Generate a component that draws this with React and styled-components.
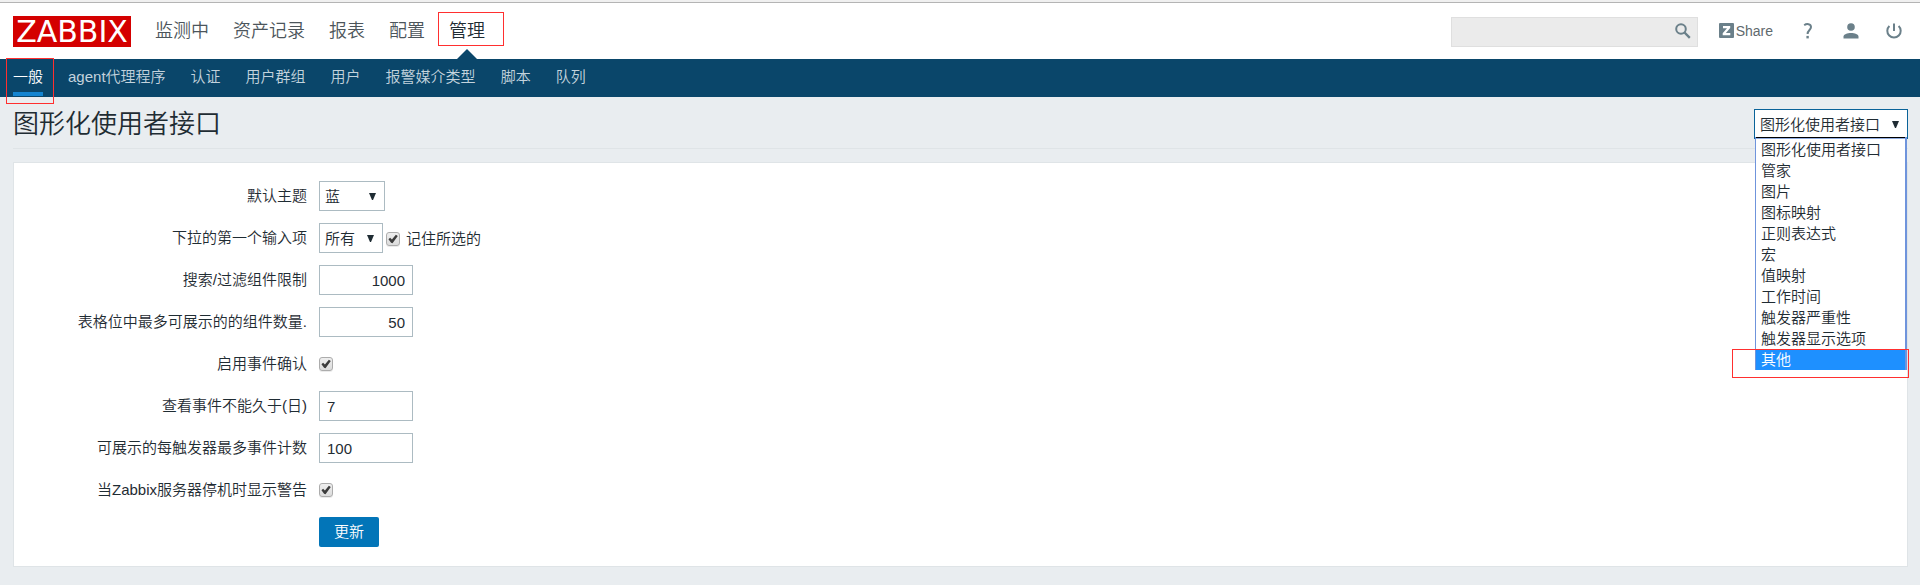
import React from 'react';
import styled, { createGlobalStyle } from 'styled-components';

const sans = '"Liberation Sans", "Noto Sans CJK SC", sans-serif';

const GlobalStyle = createGlobalStyle`
  *, *::before, *::after { box-sizing: border-box; }
  body {
    margin: 0;
    background: #e9edf0;
    color: #1f2c33;
    font: 350 15px/20px ${sans};
  }
  button, input, select { font: inherit; color: inherit; }
  a { color: inherit; text-decoration: none; }
  ul { margin: 0; padding: 0; list-style: none; }
`;

const Page = styled.div`
  min-height: 100vh;
  background: #e9edf0;
`;

const Header = styled.header`
  display: flex;
  align-items: center;
  height: 59px;
  padding: 4px 5px 0 13px;
  background: #fff;
  box-shadow: inset 0 2px #f0f0f0, inset 0 3px #b4b4b4;
`;

const Logo = styled.a`
  width: 118px;
  height: 31px;
  background: #d40000;
  color: #fff;
  font: 30px/31px "DejaVu Sans", sans-serif;
  text-align: center;
  white-space: nowrap;
`;

const MainNav = styled.nav`
  display: flex;
  align-self: stretch;
  align-items: center;
  gap: 24px;
  margin-left: 24px;
`;

const MainLink = styled.a`
  position: relative;
  display: flex;
  align-items: center;
  height: 100%;
  padding-bottom: 2px;
  font-size: 18px;
  font-weight: 350;
  white-space: nowrap;
  color: ${(p) => (p.$active ? '#1f2c33' : '#4c555b')};

  ${(p) =>
    p.$active &&
    `&::after {
      content: '';
      position: absolute;
      bottom: 0;
      left: calc(50% - 10px);
      border: solid transparent;
      border-width: 0 10px 10px;
      border-bottom-color: #0a466a;
    }`}
`;

const Tools = styled.div`
  display: flex;
  align-items: center;
  margin-left: auto;
`;

const Search = styled.form`
  display: flex;
  align-items: center;
  width: 247px;
  height: 30px;
  margin-right: 21px;
  padding-right: 6px;
  border: 1px solid #dfdfdf;
  background: #ebebeb;
`;

const SearchInput = styled.input`
  flex: 1;
  min-width: 0;
  height: 100%;
  padding: 0 8px;
  border: 0;
  outline: 0;
  background: transparent;
`;

const IconButton = styled.button`
  display: flex;
  padding: 0 0 2px;
  border: 0;
  background: none;
`;

const ShareLink = styled.a`
  display: flex;
  align-items: center;
  gap: 2px;
  margin-right: 13px;
  padding-bottom: 2px;
  font-size: 14px;
  color: #5f696e;
`;

const ToolLink = styled.a`
  display: flex;
  justify-content: center;
  width: 43px;
  padding-bottom: 2px;
`;

const SubNav = styled.nav`
  display: flex;
  gap: 25px;
  height: 38px;
  padding: 0 13px;
  background: #0a466a;
`;

const SubLink = styled.a`
  display: flex;
  align-items: center;
  height: 37px;
  border-bottom: 4px solid ${(p) => (p.$active ? '#1384d0' : 'transparent')};
  padding-top: 2px;
  color: ${(p) => (p.$active ? '#fff' : '#c3d3dd')};
  white-space: nowrap;
`;

const Mark = styled.span`
  position: absolute;
  inset: ${(p) => p.$inset};
  height: ${(p) => p.$height || 'auto'};
  border: 1px solid #ff2f2f;
  pointer-events: none;
`;

const Anchor = styled.span`
  position: relative;
  display: flex;
`;

const Main = styled.main`
  padding: 12px 12px 18px 13px;
`;

const TitleBar = styled.div`
  display: flex;
  align-items: flex-start;
  justify-content: space-between;
  height: 40px;
  border-bottom: 1px solid #dfe4e7;
`;

const Title = styled.h1`
  margin: 0;
  font-size: 26px;
  font-weight: 350;
  line-height: 30px;
`;

const SelectBox = styled.span`
  position: relative;
  display: block;
  width: ${(p) => p.$width};
`;

const Select = styled.select`
  display: block;
  appearance: none;
  width: 100%;
  height: 30px;
  padding: 2px 20px 0 5px;
  border: 1px solid ${(p) => (p.$open ? '#0a6399' : '#acbbc2')};
  border-radius: 0;
  outline: 0;
  background: #fff;
`;

const Arrow = styled.svg`
  position: absolute;
  top: 12px;
  right: 9px;
  pointer-events: none;
`;

const OptionList = styled.ul`
  position: absolute;
  top: 28px;
  left: 1px;
  right: 1px;
  z-index: 1;
  border: solid #6f94dc;
  border-width: 0 2px 0 1px;
  background: #fff;
  box-shadow: inset 0 1px #000, inset 0 2px #8fabdf;
  padding-top: 2px;
`;

const Option = styled.li`
  height: 21px;
  padding-left: 5px;
  line-height: 21px;
  color: ${(p) => (p.$selected ? '#fff' : '#1f2c33')};
  background: ${(p) => (p.$selected ? '#1e90ff' : 'transparent')};
`;

const Card = styled.form`
  display: grid;
  row-gap: 12px;
  margin-top: 13px;
  padding: 18px 10px 19px 0;
  border: 1px solid #dfe4e7;
  background: #fff;
`;

const Row = styled.div`
  display: grid;
  grid-template-columns: 293px 1fr;
  column-gap: 12px;
  align-items: center;
  height: 30px;
`;

const Label = styled.label`
  text-align: right;
`;

const Field = styled.div`
  display: flex;
  align-items: center;
  grid-column: 2;
`;

const TextInput = styled.input`
  width: 94px;
  height: 30px;
  padding: 0 7px;
  border: 1px solid #acbbc2;
  outline: 0;
  text-align: ${(p) => (p.$numeric ? 'right' : 'left')};
`;

const Checkbox = styled.input`
  appearance: none;
  flex: none;
  width: 14px;
  height: 14px;
  margin: 0;
  border: 1px solid #acacac;
  border-radius: 3px;
  background: linear-gradient(#eee, #dcdcdc);
  box-shadow: 0 1px rgba(0, 0, 0, 0.08);

  &:checked::before {
    content: '';
    display: block;
    width: 12px;
    height: 12px;
    background: #3c3c3c;
    clip-path: polygon(12% 52%, 26% 40%, 41% 55%, 74% 14%, 90% 26%, 46% 86%, 34% 82%);
  }
`;

const InlineCheck = styled.label`
  display: flex;
  align-items: center;
  gap: 6px;
  margin-left: 3px;
  padding-top: 2px;
`;

const Submit = styled.button`
  width: 60px;
  height: 30px;
  padding: 0;
  border: 0;
  border-radius: 2px;
  background: #0275b8;
  color: #fff;
`;

const mainLinks = ['监测中', '资产记录', '报表', '配置', '管理'];
const subLinks = ['一般', 'agent代理程序', '认证', '用户群组', '用户', '报警媒介类型', '脚本', '队列'];
const sections = [
  '图形化使用者接口', '管家', '图片', '图标映射', '正则表达式', '宏',
  '值映射', '工作时间', '触发器严重性', '触发器显示选项', '其他',
];

function Dropdown({ id, options, width, open, label, children }) {
  return (
    <SelectBox $width={width}>
      <Select id={id} $open={open} aria-label={label}>
        {options.map((o) => <option key={o}>{o}</option>)}
      </Select>
      <Arrow width="7" height="7" viewBox="0 0 7 7" aria-hidden="true">
        <path d="M0 0H7L4 7H3Z" fill="#1f2c33" />
      </Arrow>
      {children}
    </SelectBox>
  );
}

export default function App() {
  return (
    <Page>
      <GlobalStyle />
      <Header>
        <Logo href="#">ZABBIX</Logo>
        <MainNav>
          {mainLinks.map((t) => (
            <MainLink key={t} href="#" $active={t === '管理'}>
              {t}
              {t === '管理' && <Mark $inset="8px -19px 13px -11px" />}
            </MainLink>
          ))}
        </MainNav>
        <Tools>
          <Search>
            <SearchInput type="text" aria-label="搜索" />
            <IconButton type="button" aria-label="搜索">
              <svg width="16" height="16" viewBox="0 0 16 16" fill="none" stroke="#6b808a">
                <circle cx="6" cy="6" r="4.8" strokeWidth="2" />
                <path d="M9.5 9.5L14.8 14.8" strokeWidth="2.4" />
              </svg>
            </IconButton>
          </Search>
          <ShareLink href="#">
            <svg width="15" height="15" viewBox="0 0 15 15" aria-hidden="true">
              <rect width="15" height="15" rx="1" fill="#6b808a" />
              <path d="M4 3H11.2V5L6.9 10H11.3V12.2H3.7V10.2L8 5.2H4Z" fill="#fff" />
            </svg>
            Share
          </ShareLink>
          <ToolLink href="#" aria-label="帮助">
            <svg width="10" height="16" viewBox="0 0 10 16" fill="none" stroke="#6b808a" strokeWidth="2">
              <path d="M1.2 2.2C3.6 0.4 8 0.6 8 4C8 7 4.6 7 4.6 11" />
              <path d="M4.6 12.9V15.4" strokeWidth="2.4" />
            </svg>
          </ToolLink>
          <ToolLink href="#" aria-label="个人资料">
            <svg width="16" height="16" viewBox="0 0 16 16" fill="#6b808a">
              <circle cx="8" cy="4" r="3.8" />
              <path d="M0.5 15.5V13.5C0.5 8.8 15.5 8.8 15.5 13.5V15.5Z" />
            </svg>
          </ToolLink>
          <ToolLink href="#" aria-label="退出">
            <svg width="16" height="16" viewBox="0 0 16 16" fill="none" stroke="#6b808a" strokeWidth="2">
              <path d="M8 0.5V8" />
              <path d="M3.4 3A6.7 6.7 0 1 0 12.6 3" />
            </svg>
          </ToolLink>
        </Tools>
      </Header>
      <SubNav>
        {subLinks.map((t, i) => (
          <Anchor key={t}>
            <SubLink href="#" $active={i === 0}>{t}</SubLink>
            {i === 0 && <Mark $inset="-1px -11px -7px -7px" />}
          </Anchor>
        ))}
      </SubNav>
      <Main>
        <TitleBar>
          <Title>图形化使用者接口</Title>
          <Dropdown options={sections} width="154px" open label="配置部分">
            <OptionList role="listbox">
              {sections.map((s) => (
                <Option key={s} role="option" aria-selected={s === '其他'} $selected={s === '其他'}>{s}</Option>
              ))}
              <Mark $inset="auto -4px -8px -24px" $height="29px" />
            </OptionList>
          </Dropdown>
        </TitleBar>
        <Card>
          <Row>
            <Label htmlFor="theme">默认主题</Label>
            <Field><Dropdown id="theme" options={['蓝']} width="66px" /></Field>
          </Row>
          <Row>
            <Label htmlFor="first">下拉的第一个输入项</Label>
            <Field>
              <Dropdown id="first" options={['所有']} width="64px" />
              <InlineCheck><Checkbox type="checkbox" defaultChecked />记住所选的</InlineCheck>
            </Field>
          </Row>
          <Row>
            <Label htmlFor="limit">搜索/过滤组件限制</Label>
            <Field><TextInput id="limit" $numeric defaultValue="1000" /></Field>
          </Row>
          <Row>
            <Label htmlFor="cells">表格位中最多可展示的的组件数量.</Label>
            <Field><TextInput id="cells" $numeric defaultValue="50" /></Field>
          </Row>
          <Row>
            <Label htmlFor="ack">启用事件确认</Label>
            <Field><Checkbox id="ack" type="checkbox" defaultChecked /></Field>
          </Row>
          <Row>
            <Label htmlFor="days">查看事件不能久于(日)</Label>
            <Field><TextInput id="days" defaultValue="7" /></Field>
          </Row>
          <Row>
            <Label htmlFor="events">可展示的每触发器最多事件计数</Label>
            <Field><TextInput id="events" defaultValue="100" /></Field>
          </Row>
          <Row>
            <Label htmlFor="warn">当Zabbix服务器停机时显示警告</Label>
            <Field><Checkbox id="warn" type="checkbox" defaultChecked /></Field>
          </Row>
          <Row>
            <Field><Submit type="button">更新</Submit></Field>
          </Row>
        </Card>
      </Main>
    </Page>
  );
}
